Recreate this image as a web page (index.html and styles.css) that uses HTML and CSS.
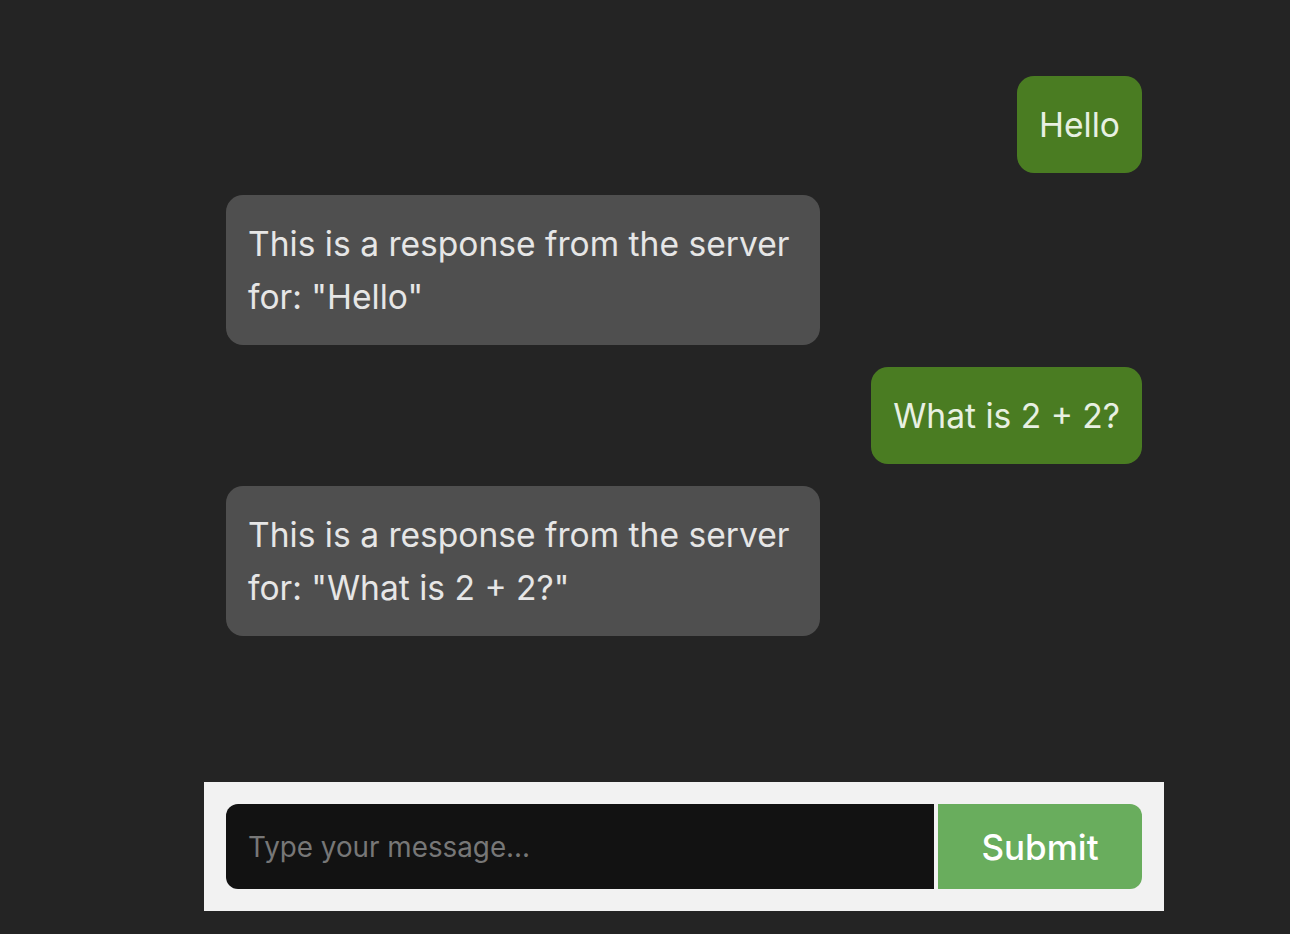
FILE: index.html
```html
<!DOCTYPE html>
<html lang="en">
<head>
<meta charset="utf-8">
<title>Chat</title>
<link rel="stylesheet" href="styles.css">
</head>
<body>
<div class="app">
  <div class="messages">
    <div class="msg user">Hello</div>
    <div class="msg bot">This is a response from the server for: "Hello"</div>
    <div class="msg user">What is 2 + 2?</div>
    <div class="msg bot">This is a response from the server for: "What is 2 + 2?"</div>
  </div>
  <form class="composer">
    <input class="composer-input" type="text" placeholder="Type your message...">
    <button class="composer-submit" type="button">Submit</button>
  </form>
</div>
</body>
</html>
```

FILE: styles.css
```css
* { box-sizing: border-box; }
html, body {
  margin: 0;
  height: 100%;
  background: #242424;
  font-family: Inter, "Noto Sans", sans-serif;
}
.app {
  margin-left: 204px;
  width: 960px;
  height: 100vh;
  display: flex;
  flex-direction: column;
  padding-bottom: 23px;
}
.messages {
  flex: 1;
  padding: 76px 22px 22px;
  display: flex;
  flex-direction: column;
  gap: 22px;
}
.msg {
  font-size: 33.6px;
  line-height: 53px;
  padding: 22px;
  border-radius: 17px;
  max-width: 594px;
}
.user {
  align-self: flex-end;
  background: #4a7c22;
  color: #e8f0e2;
}
.bot {
  align-self: flex-start;
  background: #4f4f4f;
  color: #e6e6e6;
}
.composer {
  margin: 0;
  background: #f2f2f2;
  padding: 22px;
  display: flex;
  gap: 4px;
}
.composer-input {
  flex: 1;
  height: 85px;
  border: none;
  outline: none;
  background: #121212;
  color: #e6e6e6;
  border-radius: 12px 0 0 12px;
  padding: 0 22px;
  font-family: inherit;
  font-size: 27.8px;
}
.composer-input::placeholder { color: #777777; }
.composer-submit {
  width: 204px;
  height: 85px;
  border: none;
  background: #69ad5d;
  color: #ffffff;
  border-radius: 0 12px 12px 0;
  font-family: inherit;
  font-size: 35px;
  font-weight: 500;
}
```
